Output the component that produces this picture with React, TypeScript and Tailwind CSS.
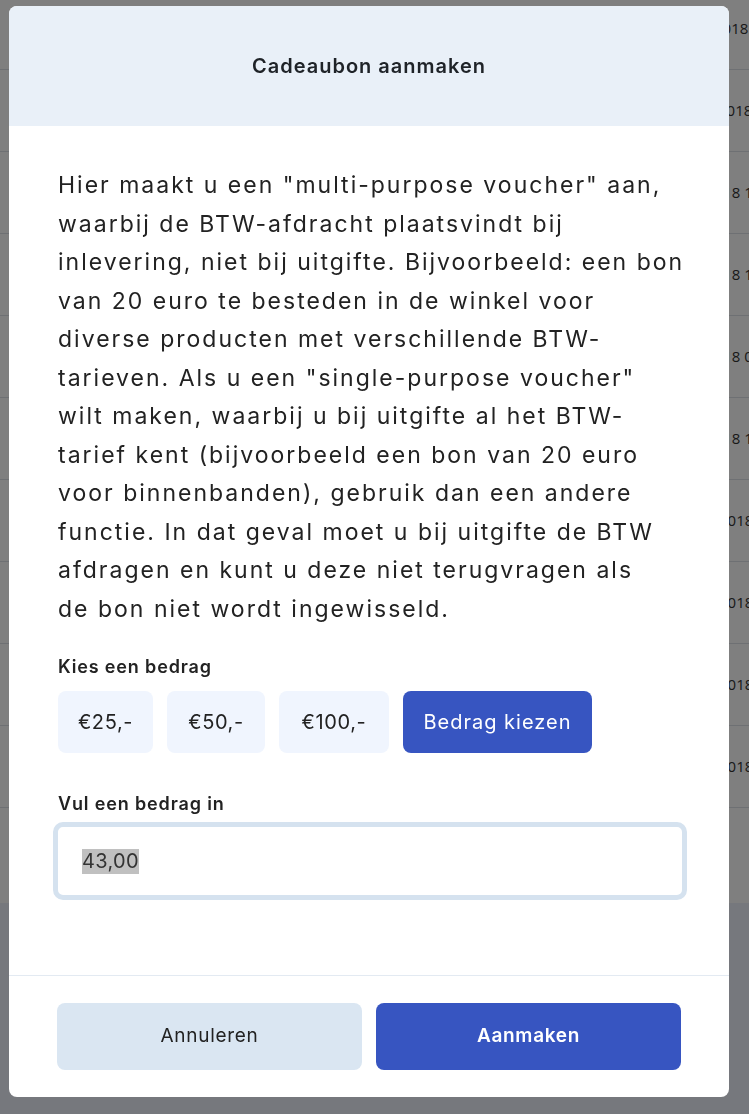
import React from "react";

const rows = [
  { pad: "ml-[714px]", text: "2018 10:42" },
  { pad: "ml-[718px]", text: "2018 09:15" },
  { pad: "ml-[706px]", text: "2018 14:03" },
  { pad: "ml-[706px]", text: "2018 11:27" },
  { pad: "ml-[706px]", text: "2018 08:51" },
  { pad: "ml-[706px]", text: "2018 16:20" },
  { pad: "ml-[719px]", text: "2018 13:34" },
  { pad: "ml-[719px]", text: "2018 12:08" },
  { pad: "ml-[719px]", text: "2018 15:46" },
  { pad: "ml-[719px]", text: "2018 10:19" },
];

const lines = [
  'Hier maakt u een "multi-purpose voucher" aan,',
  "waarbij de BTW-afdracht plaatsvindt bij",
  "inlevering, niet bij uitgifte. Bijvoorbeeld: een bon",
  "van 20 euro te besteden in de winkel voor",
  "diverse producten met verschillende BTW-",
  'tarieven. Als u een "single-purpose voucher"',
  "wilt maken, waarbij u bij uitgifte al het BTW-",
  "tarief kent (bijvoorbeeld een bon van 20 euro",
  "voor binnenbanden), gebruik dan een andere",
  "functie. In dat geval moet u bij uitgifte de BTW",
  "afdragen en kunt u deze niet terugvragen als",
  "de bon niet wordt ingewisseld.",
];

function BackgroundTable() {
  return (
    <div className="min-h-[1114px] bg-[#ecf0fa] overflow-hidden font-['Open_Sans',sans-serif]">
      <div className="bg-white h-[903px] overflow-hidden">
        <div className="-mt-[12px]">
          {rows.map((r, i) => (
            <div
              key={i}
              className="h-[82px] border-b border-[#dde1e6] flex items-center whitespace-nowrap text-[15px] text-[#333]"
            >
              <span className={r.pad}>{r.text}</span>
            </div>
          ))}
        </div>
      </div>
    </div>
  );
}

function AmountButton({ label, width }: { label: string; width: string }) {
  return (
    <button className={`${width} h-[62px] rounded-[8px] bg-[#f0f5fe] text-[20px] tracking-[0.6px] text-[#222]`}>
      {label}
    </button>
  );
}

export default function App() {
  return (
    <div className="relative w-[749px] h-[1114px] overflow-hidden">
      <BackgroundTable />
      <div className="fixed inset-0 bg-black/50 pl-[9px] pt-[6px] font-['Inter',sans-serif]">
        <div className="w-[720px] h-[1091px] bg-white rounded-[8px] overflow-hidden flex flex-col">
          <div className="h-[120px] bg-[#e9f0f8] flex items-center justify-center">
            <h2 className="text-[20px] font-semibold text-[#1f2328] tracking-[1px]">
              Cadeaubon aanmaken
            </h2>
          </div>

          <div className="flex-1 px-[49px] pt-[40px]">
            <p className="text-[23px] leading-[38.5px] text-[#222] tracking-[2px]">
              {lines.map((l, i) => (
                <span key={i} className="block whitespace-nowrap">
                  {l}
                </span>
              ))}
            </p>

            <div className="mt-[27px] text-[18px] leading-[24px] font-semibold text-[#222] tracking-[0.85px]">
              Kies een bedrag
            </div>
            <div className="mt-[12px] flex gap-[14px]">
              <AmountButton label="€25,-" width="w-[95px]" />
              <AmountButton label="€50,-" width="w-[98px]" />
              <AmountButton label="€100,-" width="w-[110px]" />
              <button className="w-[189px] h-[62px] rounded-[8px] bg-[#3755c1] text-[20px] tracking-[1px] text-white">
                Bedrag kiezen
              </button>
            </div>

            <div className="mt-[39px] text-[18px] leading-[24px] font-semibold text-[#222] tracking-[0.85px]">
              Vul een bedrag in
            </div>
            <div className="mt-[6px] -ml-[5px] w-[634px] h-[78px] border-[5px] border-[#d5e2ef] rounded-[10px] flex items-center pl-[24px]">
              <span className="bg-[#c0c0c0] text-[20px] leading-[25px] text-[#333] tracking-[0.3px]">43,00</span>
            </div>
          </div>

          <div className="border-t border-[#e3eaf2] px-[48px] pt-[27px] pb-[27px] flex gap-[14px]">
            <button className="flex-1 h-[67px] rounded-[8px] bg-[#dae6f2] text-[19px] tracking-[0.7px] text-[#222]">
              Annuleren
            </button>
            <button className="flex-1 h-[67px] rounded-[8px] bg-[#3755c1] text-[19px] tracking-[0.7px] font-semibold text-white">
              Aanmaken
            </button>
          </div>
        </div>
      </div>
    </div>
  );
}
